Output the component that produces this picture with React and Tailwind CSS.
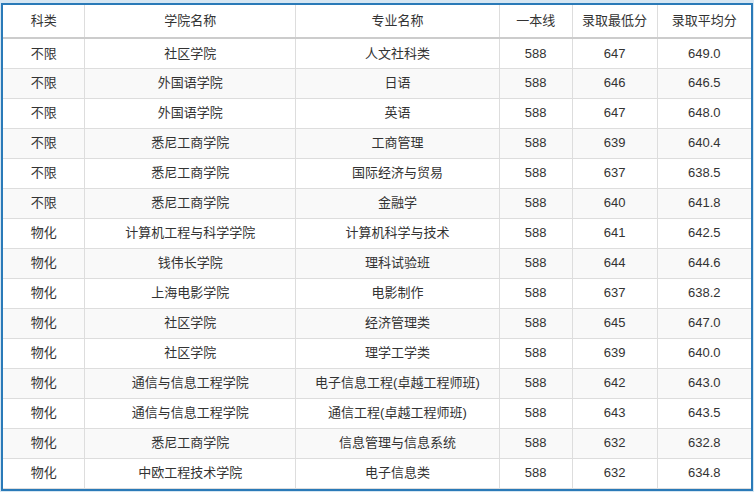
const rows = [
["不限","社区学院","人文社科类","588","647","649.0"],
["不限","外国语学院","日语","588","646","646.5"],
["不限","外国语学院","英语","588","647","648.0"],
["不限","悉尼工商学院","工商管理","588","639","640.4"],
["不限","悉尼工商学院","国际经济与贸易","588","637","638.5"],
["不限","悉尼工商学院","金融学","588","640","641.8"],
["物化","计算机工程与科学学院","计算机科学与技术","588","641","642.5"],
["物化","钱伟长学院","理科试验班","588","644","644.6"],
["物化","上海电影学院","电影制作","588","637","638.2"],
["物化","社区学院","经济管理类","588","645","647.0"],
["物化","社区学院","理学工学类","588","639","640.0"],
["物化","通信与信息工程学院","电子信息工程(卓越工程师班)","588","642","643.0"],
["物化","通信与信息工程学院","通信工程(卓越工程师班)","588","643","643.5"],
["物化","悉尼工商学院","信息管理与信息系统","588","632","632.8"],
["物化","中欧工程技术学院","电子信息类","588","632","634.8"],
];
const head = ["科类","学院名称","专业名称","一本线","录取最低分","录取平均分"];
const widths = ["w-[82px]","w-[211px]","w-[204px]","w-[73px]","w-[85px]","w-[94px]"];
export default function App(){
  return (
    <div className="w-[754px] h-[492px] bg-[#d6e6f2] pt-[3px] pl-[1px]" style={{fontFamily:'"Liberation Sans","Noto Sans CJK SC",sans-serif'}}>
      <div className="w-[752px] h-[488px] border-2 border-[#2a7ab8] bg-white overflow-hidden">
        <table className="border-collapse text-[13px] text-[#333] table-fixed">
          <thead>
            <tr className="h-[33px]">
              {head.map((h,i)=>(
                <th key={i} className={`${widths[i]} font-normal text-center border-r border-[#ddd] border-b-2 border-b-[#ccc] last:border-r-0`}>{h}</th>
              ))}
            </tr>
          </thead>
          <tbody>
            {rows.map((r,ri)=>(
              <tr key={ri} className={`h-[30px] ${ri%2===1?"bg-[#f9f9f9]":"bg-white"}`}>
                {r.map((c,ci)=>(
                  <td key={ci} className="text-center border-r border-b border-[#ddd] last:border-r-0 p-0">{c}</td>
                ))}
              </tr>
            ))}
          </tbody>
        </table>
      </div>
    </div>
  );
}
